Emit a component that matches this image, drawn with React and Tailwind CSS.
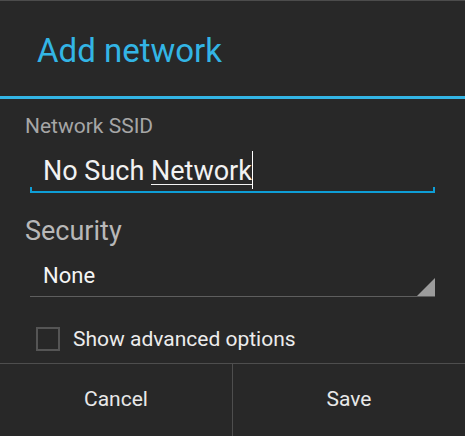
import React from "react";

const App = () => {
  return (
    <div className="w-[465px] h-[436px] bg-[#282828] border-t border-[#4c4c4c] flex flex-col overflow-hidden font-['Roboto',sans-serif]">
      {/* Title */}
      <div className="h-[95px] pt-[30px] pl-[37px]">
        <h1 className="text-[33px] leading-[40px] text-[#33b5e5]">Add network</h1>
      </div>
      <div className="h-[3px] bg-[#33b5e5]" />

      {/* SSID field */}
      <div className="mt-[15px] pl-[25px] text-[21px] leading-[24px] text-[#a6a6a6]">Network SSID</div>
      <div className="mt-[17px] mx-[30px]">
        <div className="pl-[13px] text-[27px] leading-[32px] text-[#f2f2f2]">
          No Such{" "}
          <span className="relative underline decoration-1 underline-offset-[4px]">
            Network
            <span className="absolute right-[-1px] top-[-4px] w-[1px] h-[38px] bg-white" />
          </span>
        </div>
        <div className="h-[6px] border-l-2 border-r-2 border-b-2 border-[#0e9ed6]" />
      </div>

      {/* Security */}
      <div className="mt-[22px] pl-[25px] text-[27px] leading-[32px] text-[#b8b8b8]">Security</div>
      <div className="mt-[16px] mx-[30px] flex items-end justify-between border-b border-[#5e5e5e]">
        <div className="pl-[13px] pb-[7px] text-[22px] leading-[26px] text-[#f5f5f5]">None</div>
        <svg width="18" height="18" viewBox="0 0 18 18" className="block">
          <polygon points="18,0 18,18 0,18" fill="#9c9c9c" />
        </svg>
      </div>

      {/* Checkbox */}
      <div className="mt-[30px] mb-[12px] pl-[36px] flex items-center gap-[13px]">
        <div className="w-[24px] h-[24px] border-2 border-[#555555]" />
        <span className="text-[21px] leading-[24px] text-[#ececec]">Show advanced options</span>
      </div>

      {/* Buttons */}
      <div className="flex-1 flex border-t border-[#4e4e4e]">
        <button className="w-[232px] flex items-center justify-center text-[21px] text-[#e8e8e8]">Cancel</button>
        <div className="w-[1px] bg-[#4e4e4e]" />
        <button className="flex-1 flex items-center justify-center text-[21px] text-[#e8e8e8]">Save</button>
      </div>
    </div>
  );
};

export default App;
